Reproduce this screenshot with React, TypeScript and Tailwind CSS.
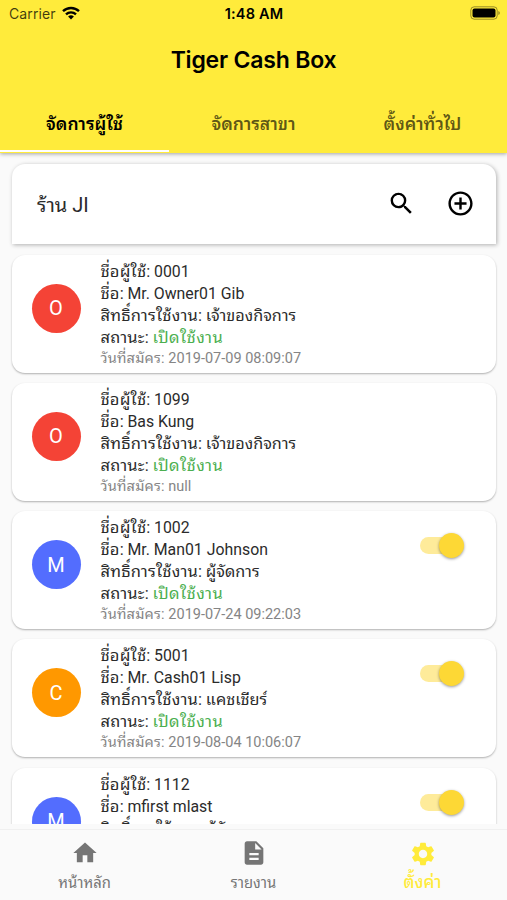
import clsx from "clsx";
import { MdAddCircleOutline, MdDescription, MdHome, MdSearch, MdSettings } from "react-icons/md";

type User = {
  id: string;
  name: string;
  role: string;
  createdAt: string;
  initial: string;
  color: string;
  hasSwitch?: boolean;
};

const USERS: User[] = [
  { id: "0001", name: "Mr. Owner01 Gib", role: "เจ้าของกิจการ", createdAt: "2019-07-09 08:09:07", initial: "O", color: "bg-[#f44336]" },
  { id: "1099", name: "Bas Kung", role: "เจ้าของกิจการ", createdAt: "null", initial: "O", color: "bg-[#f44336]" },
  { id: "1002", name: "Mr. Man01 Johnson", role: "ผู้จัดการ", createdAt: "2019-07-24 09:22:03", initial: "M", color: "bg-[#536dfe]", hasSwitch: true },
  { id: "5001", name: "Mr. Cash01 Lisp", role: "แคชเชียร์", createdAt: "2019-08-04 10:06:07", initial: "C", color: "bg-[#ff9800]", hasSwitch: true },
  { id: "1112", name: "mfirst mlast", role: "ผู้จัดการ", createdAt: "", initial: "M", color: "bg-[#536dfe]", hasSwitch: true },
];

const TABS = ["จัดการผู้ใช้", "จัดการสาขา", "ตั้งค่าทั่วไป"];

function StatusBar() {
  return (
    <div className="grid h-7 grid-cols-3 items-center pl-[9px] pr-[7px] font-['Inter',sans-serif] text-[14px] leading-7">
      <div className="flex items-center gap-[6px] tracking-[0.1px] text-black/75">
        Carrier
        <svg viewBox="0 0 18 14" className="-mt-[2px] h-[14px] w-[18px]" fill="none" stroke="#000" strokeWidth="2.4">
          <path d="M1 5.2a11.6 11.6 0 0 1 16 0" />
          <path d="M4 8.4a7.3 7.3 0 0 1 10 0" />
          <path d="M9 13.4 6.1 10.6a4.1 4.1 0 0 1 5.8 0z" fill="#000" stroke="none" />
        </svg>
      </div>
      <div className="-ml-[1px] text-center text-[14.5px] font-semibold tracking-[0.2px] text-black">1:48 AM</div>
      <svg viewBox="0 0 30 14" className="-mt-[2px] h-[14px] w-[30px] justify-self-end">
        <rect x="0.8" y="0.8" width="26.4" height="12.4" rx="3.4" fill="none" stroke="#000" strokeOpacity="0.4" />
        <rect x="2.5" y="2.5" width="23" height="9" rx="2" fill="#000" />
        <path d="M28.4 5v4q1.4-.6 1.4-2t-1.4-2" fill="#000" fillOpacity="0.45" />
      </svg>
    </div>
  );
}

function Header() {
  return (
    <header className="relative z-10 h-[152.5px] shrink-0 bg-[#ffeb3b] shadow-[0_1px_4px_rgba(0,0,0,0.35)]">
      <StatusBar />
      <h1 className="h-[66px] text-center font-['Inter',sans-serif] text-[23px] font-semibold leading-[64px] tracking-[-0.2px] text-black">
        Tiger Cash Box
      </h1>
      <nav className="grid h-[58px] grid-cols-3">
        {TABS.map((tab, i) => (
          <button
            key={tab}
            className={clsx(
              "border-b-[2.5px] pt-[5px] text-[17.5px] font-semibold",
              i === 0 ? "border-white text-black" : "border-transparent text-black/65",
            )}
          >
            {tab}
          </button>
        ))}
      </nav>
    </header>
  );
}

function Switch() {
  return (
    <div className="mt-[22px] mr-[31px] flex h-[25px] w-[45px] items-center">
      <div className="h-[17px] w-8 rounded-full bg-[#fdd835]/50" />
      <div className="-ml-[13px] size-[25px] shrink-0 rounded-full bg-[#fdd835] shadow-[0_1px_3px_rgba(0,0,0,0.4)]" />
    </div>
  );
}

function Label({ children }: { children: string }) {
  return <span className="mr-[3.5px] inline-block text-[16.5px] tracking-[0.2px]">{children}</span>;
}

function UserCard({ user }: { user: User }) {
  return (
    <article className="mb-[10.3px] flex h-[118px] shrink-0 rounded-[13px] bg-white shadow-[0_1px_2px_rgba(0,0,0,0.3)]">
      <div className={clsx("mt-[29px] ml-[19.5px] flex size-[49px] items-center justify-center rounded-full text-[20px] text-white", user.color)}>
        {user.initial}
      </div>
      <div className="ml-5 flex-1 pt-[6px] text-[15.85px] leading-[22px] whitespace-nowrap text-[#2b2b2b]">
        <p className="h-[22px]"><Label>ชื่อผู้ใช้:</Label>{user.id}</p>
        <p className="h-[22px]"><Label>ชื่อ:</Label>{user.name}</p>
        <p className="h-[22px]"><Label>สิทธิ์การใช้งาน:</Label><span className="text-[16.2px]">{user.role}</span></p>
        <p className="h-[22px]">
          <Label>สถานะ:</Label><span className="text-[16.5px] tracking-[0.4px] text-[#4caf50]">เปิดใช้งาน</span>
        </p>
        <p className="text-[14.5px] leading-[20px] text-[#858585]">
          <span className="tracking-[0.2px]">วันที่สมัคร:</span> {user.createdAt}
        </p>
      </div>
      {user.hasSwitch && <Switch />}
    </article>
  );
}

function BottomNav() {
  return (
    <nav className="grid h-[71px] shrink-0 grid-cols-3 border-t border-[#f0f0f0] bg-[#fafafa] text-[14.8px] leading-5 text-[#757575]">
      <div className="flex flex-col items-center pt-[9px]">
        <MdHome size={28} />
        <span className="mt-[6px]">หน้าหลัก</span>
      </div>
      <div className="flex flex-col items-center pt-[9px]">
        <MdDescription size={28} />
        <span className="mt-[6px]">รายงาน</span>
      </div>
      <div className="flex flex-col items-center pt-[10px] text-[#ffeb3b]">
        <MdSettings size={28} />
        <span className="mt-[4px] text-[17px] font-medium">ตั้งค่า</span>
      </div>
    </nav>
  );
}

export default function App() {
  return (
    <div className="flex h-[900px] w-[507px] flex-col overflow-hidden bg-[#fafafa] font-['Roboto','Noto_Sans_Thai_Looped','Loma','Waree',sans-serif]">
      <Header />
      <main className="flex h-[671.5px] flex-col overflow-hidden pt-[11px] pr-[11px] pl-3">
        <section className="mb-[11px] flex h-20 shrink-0 items-center rounded-t-[13px] bg-white pr-[21px] pl-[25px] shadow-[1px_1px_4px_rgba(0,0,0,0.3)]">
          <h2 className="flex-1 pt-[3px] text-[20px] text-[#2b2b2b]">ร้าน JI</h2>
          <MdSearch size={29} />
          <MdAddCircleOutline size={29} className="ml-[30px]" />
        </section>
        {USERS.map((user) => (
          <UserCard key={user.id} user={user} />
        ))}
      </main>
      <div className="h-[5px] shrink-0" />
      <BottomNav />
    </div>
  );
}
